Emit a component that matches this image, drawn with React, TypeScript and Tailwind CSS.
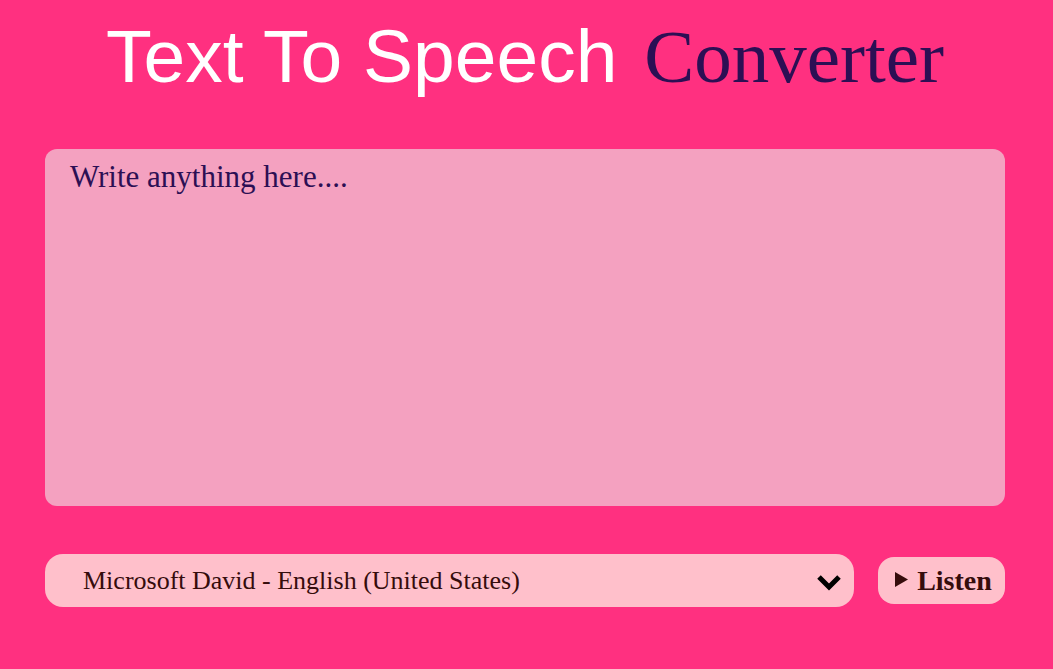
import { useState } from "react";

const voices = [
  "Microsoft David - English (United States)",
  "Microsoft Mark - English (United States)",
  "Microsoft Zira - English (United States)",
];

export default function App() {
  const [text, setText] = useState("");
  const [voice, setVoice] = useState(voices[0]);

  const speak = () => {
    const message = new SpeechSynthesisUtterance(text);
    message.voice =
      window.speechSynthesis.getVoices().find((v) => v.name === voice) ?? null;
    window.speechSynthesis.speak(message);
  };

  return (
    <main className="flex min-h-screen flex-col bg-[#ff3080] pt-3.5 pr-12 pb-16 pl-[45px] font-['Liberation_Serif',serif]">
      <h1 className="text-center text-[75px] leading-[84px] text-[#2c0f54]">
        <span className="mr-2 font-['Liberation_Sans',sans-serif] text-white">
          Text To Speech
        </span>{" "}
        Converter
      </h1>

      <textarea
        aria-label="Text to read aloud"
        placeholder="Write anything here...."
        value={text}
        onChange={(e) => setText(e.target.value)}
        className="mt-[50px] h-[357px] w-full resize-none rounded-xl bg-[#f4a1c0] px-[25px] py-3 text-[31px] leading-8 text-[#2c0f54] outline-none placeholder:text-[#2c0f54]"
      />

      <div className="mt-12 flex items-center gap-6">
        <div className="grid flex-1 items-center">
          <select
            aria-label="Voice"
            value={voice}
            onChange={(e) => setVoice(e.target.value)}
            className="col-start-1 row-start-1 h-[53px] w-full appearance-none rounded-[18px] bg-[#ffc0cb] pr-12 pl-[38px] text-[26px] text-[#360c0c] outline-none"
          >
            {voices.map((name) => (
              <option key={name}>{name}</option>
            ))}
          </select>
          <svg
            aria-hidden="true"
            viewBox="0 0 24 20"
            className="pointer-events-none col-start-1 row-start-1 mr-[13px] h-5 w-6 justify-self-end"
          >
            <path
              d="M2 6L12 16L22 6"
              fill="none"
              stroke="#000"
              strokeWidth="5"
            />
          </svg>
        </div>

        <button
          type="button"
          onClick={speak}
          className="flex h-[47px] w-[127px] items-center justify-center gap-2 rounded-2xl bg-[#ffc0cb] pl-1 text-[28px] font-bold text-[#360c0c]"
        >
          <svg
            aria-hidden="true"
            viewBox="0 0 14 18"
            className="h-[18px] w-3.5 fill-current"
          >
            <path d="M0 0L13 7.5L0 15Z" />
          </svg>
          Listen
        </button>
      </div>
    </main>
  );
}
